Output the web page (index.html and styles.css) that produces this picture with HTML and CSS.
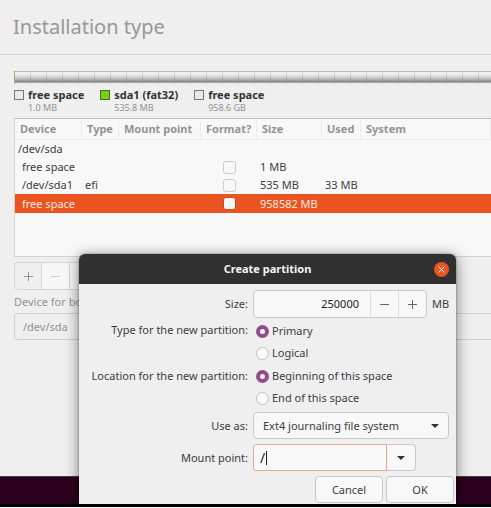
FILE: index.html
```html
<!DOCTYPE html>
<html lang="en">
<head>
<meta charset="utf-8">
<title>Installation type</title>
<link rel="stylesheet" href="styles.css">
</head>
<body>
<div class="screen">
  <main class="installer">
    <header class="page-head"><h1>Installation type</h1></header>
    <section class="content">
      <div class="disk-bar"></div>
      <ul class="legend">
        <li><span class="swatch"></span><div><strong>free space</strong><small>1.0 MB</small></div></li>
        <li><span class="swatch used"></span><div><strong>sda1 (fat32)</strong><small>535.8 MB</small></div></li>
        <li><span class="swatch"></span><div><strong>free space</strong><small>958.6 GB</small></div></li>
      </ul>
      <div class="table-box">
        <table>
          <colgroup><col class="c-device"><col class="c-type"><col class="c-mount"><col class="c-format"><col class="c-size"><col class="c-used"><col></colgroup>
          <thead><tr><th>Device</th><th>Type</th><th>Mount point</th><th>Format?</th><th>Size</th><th>Used</th><th>System</th></tr></thead>
          <tbody>
            <tr><td class="disk" colspan="7">/dev/sda</td></tr>
            <tr><td class="part">free space</td><td></td><td></td><td class="tick"><input type="checkbox" aria-label="Format free space"></td><td>1 MB</td><td></td><td></td></tr>
            <tr><td class="part">/dev/sda1</td><td>efi</td><td></td><td class="tick"><input type="checkbox" aria-label="Format /dev/sda1"></td><td>535 MB</td><td>33 MB</td><td></td></tr>
            <tr class="selected"><td class="part">free space</td><td></td><td></td><td class="tick"><input type="checkbox" aria-label="Format free space"></td><td>958582 MB</td><td></td><td></td></tr>
          </tbody>
        </table>
      </div>
      <div class="tools">
        <button type="button" aria-label="Add"><svg viewBox="0 0 13 13"><path d="M2 6.5h9M6.5 2v9"/></svg></button>
        <button type="button" aria-label="Remove" disabled><svg viewBox="0 0 13 13"><path d="M2 6.5h9"/></svg></button>
        <button type="button" disabled>Change...</button>
      </div>
      <label class="boot-label" for="boot">Device for boot loader installation:</label>
      <select id="boot" class="boot"><option>/dev/sda</option></select>
    </section>
  </main>
  <div class="desktop"></div>
  <div class="edge"></div>

  <form class="dialog" role="dialog" aria-labelledby="dialog-title">
    <header class="titlebar">
      <h2 id="dialog-title">Create partition</h2>
      <button type="button" class="close" aria-label="Close"><svg viewBox="0 0 15 15"><path d="M4.5 4.5l6 6M10.5 4.5l-6 6"/></svg></button>
    </header>
    <div class="fields">
      <label class="name" for="size">Size:</label>
      <div class="size-row">
        <div class="spin">
          <input id="size" type="text" value="250000">
          <button type="button" aria-label="Decrease"><svg viewBox="0 0 13 13"><path d="M2 6.5h9"/></svg></button>
          <button type="button" aria-label="Increase"><svg viewBox="0 0 13 13"><path d="M2 6.5h9M6.5 2v9"/></svg></button>
        </div>
        <span>MB</span>
      </div>
      <span class="name" id="type-name">Type for the new partition:</span>
      <div class="radios" role="radiogroup" aria-labelledby="type-name">
        <label><input type="radio" name="type" checked>Primary</label>
        <label><input type="radio" name="type">Logical</label>
      </div>
      <span class="name" id="location-name">Location for the new partition:</span>
      <div class="radios" role="radiogroup" aria-labelledby="location-name">
        <label><input type="radio" name="location" checked>Beginning of this space</label>
        <label><input type="radio" name="location">End of this space</label>
      </div>
      <label class="name tall" for="use">Use as:</label>
      <div class="picker">
        <select id="use"><option>Ext4 journaling file system</option></select>
        <svg class="arrow" viewBox="0 0 8 4"><path d="M0 0h8L4 4z"/></svg>
      </div>
      <label class="name tall" for="mount">Mount point:</label>
      <div class="combo">
        <div class="entry"><input id="mount" type="text" value="/"><span class="caret"></span></div>
        <button type="button" aria-label="Show mount points"><svg class="arrow" viewBox="0 0 8 4"><path d="M0 0h8L4 4z"/></svg></button>
      </div>
    </div>
    <footer class="actions"><button type="button">Cancel</button><button type="submit">OK</button></footer>
  </form>
</div>
</body>
</html>
```
FILE: styles.css
```css
* { box-sizing: border-box; }
body {
  margin: 0;
  background: #efefef;
  color: #3d3d3d;
  font: 11px/18px "Noto Sans", "Open Sans", sans-serif;
}
h1, h2, ul { margin: 0; padding: 0; font-weight: 400; }
button, input, select { font: inherit; color: inherit; margin: 0; }
button { padding: 0; }
svg { display: block; fill: none; stroke: currentColor; stroke-width: 1; }
.screen {
  position: relative;
  display: flex;
  flex-direction: column;
  min-height: 100vh;
  overflow: hidden;
}
.installer { flex: 1; overflow: hidden; background: #efefef; }
.desktop { height: 28px; background: #2a001e; border-top: 1px solid #493d47; }
.edge { height: 4px; background: #000; border-bottom: 1px solid #f2f2f2; }

.page-head {
  height: 55px;
  padding: 13px 13px 0;
  border-bottom: 1px solid #d3d3d3;
}
h1 { font-size: 20px; line-height: 28px; color: #979797; }
.content { padding: 16px 0 0 14px; }
.disk-bar {
  height: 13px;
  border-left: 1px solid #8fbb69;
  border-top: 1px solid #b8b8b8;
  background:
    repeating-linear-gradient(90deg, transparent 0 15px, rgba(120, 120, 120, .25) 15px 16px),
    linear-gradient(#f0f0f0 0, #ebebeb 3px, #bcbcbc 7px, #a6a6a6 8px, #828282 10px, #dcdcdc 11px, #efefef 12px);
}
.legend {
  display: flex;
  gap: 16px;
  height: 34px;
  padding-top: 4px;
  list-style: none;
}
.legend li { display: flex; gap: 4px; }
.legend strong, .legend small { display: block; }
.legend strong { line-height: 14px; color: #333; }
.legend small { font-size: 9px; line-height: 12px; color: #929292; }
.swatch {
  width: 10px;
  height: 10px;
  margin-top: 2px;
  border: 1px solid #777;
  background: #e9e9e9;
}
.swatch.used { background: #73d216; border-color: #476d25; }

.table-box {
  height: 139px;
  border: 1px solid #d2d2d2;
  border-right: 0;
  border-top-color: #c0c0c0;
  background: #f8f8f8;
}
table { width: 100%; table-layout: fixed; border-collapse: separate; border-spacing: 0; }
.c-device { width: 67px; }
.c-type { width: 37px; }
.c-mount { width: 82px; }
.c-format { width: 56px; }
.c-size { width: 65px; }
.c-used { width: 39px; }
th {
  height: 21px;
  padding: 0 0 0 5px;
  border-right: 1px solid #ececec;
  border-bottom: 1px solid #ececec;
  color: #939393;
  text-align: left;
  white-space: nowrap;
}
td { height: 18px; padding: 0 0 0 3px; white-space: nowrap; }
td.part { padding-left: 7px; }
td.tick { padding: 0; }
td input {
  display: block;
  appearance: none;
  width: 13px;
  height: 13px;
  margin: 0 auto;
  border: 1px solid #cbcbcb;
  border-radius: 3px;
  background: #f8f8f8;
}
.selected td { height: 19px; background: #e95420; color: #fde9e2; }
.selected input { border-color: #c94c20; }

.tools { display: flex; width: 180px; margin-top: 5px; color: #929292; }
.tools button {
  display: flex;
  align-items: center;
  justify-content: center;
  flex: 1;
  height: 28px;
  border: 1px solid #d4d4d4;
  border-left-width: 0;
  background: #efefef;
}
.tools button:first-child { border-left-width: 1px; border-radius: 4px 0 0 4px; }
.tools button:not(:last-child) { flex: 0 0 28px; }
.tools button:disabled { background: #f7f7f7; color: #cdcdcd; }
.tools svg, .spin svg { width: 13px; height: 13px; }
.boot-label { display: block; margin: 3px 0 2px; color: #929292; }
.boot {
  display: block;
  appearance: none;
  width: 100%;
  height: 27px;
  padding: 0 8px;
  border: 1px solid #d0d0d0;
  border-right: 0;
  border-radius: 4px 0 0 4px;
  background: #efefef;
  color: #929292;
}

.dialog {
  position: absolute;
  top: 254px;
  right: 35px;
  bottom: 4px;
  left: 79px;
  border-radius: 6px 6px 0 0;
  background: #efefef;
  box-shadow: 0 0 2px rgba(0, 0, 0, .45), 0 2px 14px rgba(0, 0, 0, .5);
  clip-path: inset(-20px -20px 0 -20px);
}
.titlebar {
  position: relative;
  display: flex;
  align-items: center;
  justify-content: center;
  height: 30px;
  border-radius: 6px 6px 0 0;
  background: #303030;
  color: #f5f5f5;
}
h2 { font-size: 11px; font-weight: 700; }
.close {
  position: absolute;
  right: 7px;
  width: 15px;
  height: 15px;
  border: 0;
  border-radius: 50%;
  background: #e95420;
  color: #fff;
}
.close svg { width: 15px; height: 15px; }
.fields {
  display: grid;
  grid-template-columns: 169px 1fr;
  column-gap: 5px;
  padding: 6px 7px 0 0;
}
.name { text-align: right; white-space: nowrap; line-height: 24px; }
.name:first-child { line-height: 28px; }
.name.tall { line-height: 27px; }
.size-row { display: flex; align-items: center; gap: 5px; }
.spin {
  display: flex;
  width: 174px;
  height: 28px;
  border: 1px solid #c8c8c8;
  border-radius: 4px;
  background: #f8f8f8;
  overflow: hidden;
}
.spin input {
  flex: 1;
  min-width: 0;
  padding: 0 11px 0 6px;
  border: 0;
  background: none;
  color: #222;
  text-align: right;
}
.spin button {
  display: flex;
  align-items: center;
  justify-content: center;
  width: 28px;
  border: 0;
  border-left: 1px solid #dedede;
  background: none;
  color: #666;
}
.radios { padding-top: 2px; }
.radios label { display: flex; align-items: center; gap: 3px; width: max-content; height: 22px; }
.radios + .name + .radios { padding-top: 1px; margin-bottom: 3px; }
.radios input {
  appearance: none;
  width: 13px;
  height: 13px;
  margin: 0 0 0 3px;
  border: 1px solid #bfbfbf;
  border-radius: 50%;
  background: #fafafa;
}
.radios input:checked { border: 4px solid #924d8b; }
.picker { position: relative; height: 27px; margin-bottom: 5px; }
.picker select {
  appearance: none;
  width: 100%;
  height: 27px;
  padding: 0 9px;
  border: 1px solid #c8c8c8;
  border-radius: 4px;
  background: #f8f8f8;
}
.arrow { width: 8px; height: 4px; fill: #333; stroke: none; }
.picker .arrow { position: absolute; top: 12px; right: 10px; }
.combo { display: flex; height: 27px; }
.entry {
  position: relative;
  display: flex;
  width: 134px;
  border: 1px solid #f2a58b;
  border-radius: 3px 0 0 3px;
  background: #f8f8f8;
}
.entry input { width: 100%; padding: 0 6px; border: 0; background: none; color: #222; font-size: 14px; outline: 0; }
.caret { position: absolute; left: 12px; top: 6px; width: 1px; height: 14px; background: #222; }
.combo button {
  display: flex;
  align-items: center;
  justify-content: center;
  width: 29px;
  border: 1px solid #c8c8c8;
  border-left: 0;
  border-radius: 0 4px 4px 0;
  background: #f8f8f8;
}
.actions { display: flex; justify-content: flex-end; gap: 3px; padding: 5px 2px 0 0; }
.actions button {
  width: 68px;
  height: 27px;
  border: 1px solid #c8c8c8;
  border-radius: 4px;
  background: #f8f8f8;
}
```
